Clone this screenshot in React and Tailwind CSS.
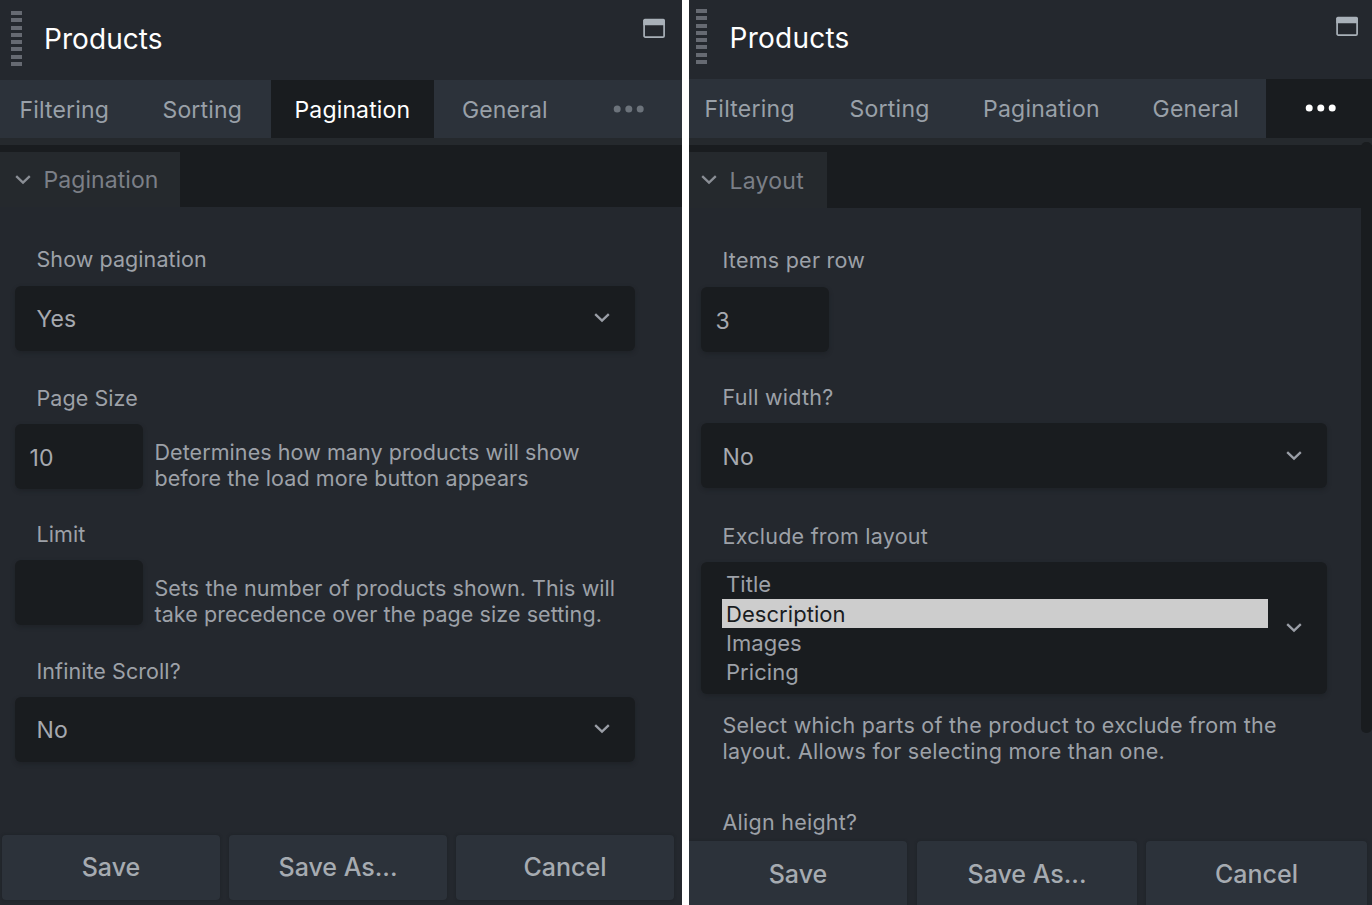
import React from "react";

function Grip() {
  return (
    <div className="flex flex-col gap-[3.3px]">
      {Array.from({ length: 8 }, (_, i) => (
        <span key={i} className="h-[4px] w-[11px] bg-[#666a72]" />
      ))}
    </div>
  );
}

function WindowIcon() {
  return (
    <svg width="24" height="22" viewBox="0 0 24 22" className="block">
      <rect x="2.1" y="2.1" width="20" height="17" rx="1.2" fill="none" stroke="#a9b1b9" strokeWidth="1.7" />
      <path d="M1.3 2.2Q1.3 0.7 2.8 0.7H21.4Q22.9 0.7 22.9 2.2V7.2H1.3Z" fill="#a9b1b9" />
    </svg>
  );
}

function Chevron({ className = "text-[#9a9ea6]" }) {
  return (
    <svg width="16" height="10" viewBox="0 0 16 10" className={`block shrink-0 ${className}`}>
      <path d="M1.2 1.2L8 7.7L14.8 1.2" fill="none" stroke="currentColor" strokeWidth="2.3" />
    </svg>
  );
}

function Dots({ className }) {
  return (
    <svg width="32" height="8" viewBox="0 0 32 8" className={`block ${className}`}>
      <circle cx="4.2" cy="4" r="3.5" fill="currentColor" />
      <circle cx="15.8" cy="4" r="3.5" fill="currentColor" />
      <circle cx="27.2" cy="4" r="3.5" fill="currentColor" />
    </svg>
  );
}

function Label({ className, children }) {
  return (
    <div className={`text-[21.5px] leading-[26px] text-[#9da1a8] ${className}`}>{children}</div>
  );
}

function Select({ value, className }) {
  return (
    <div className={`flex h-[65px] shrink-0 items-center justify-between rounded-[6px] bg-[#191c1f] pl-[22px] pr-[25px] shadow-[0_2px_4px_rgba(20,23,26,0.35)] ${className}`}>
      <span className="pt-[2px] text-[23px] leading-[26px] text-[#a6a9af]">{value}</span>
      <Chevron />
    </div>
  );
}

function NumberBox({ value, className }) {
  return (
    <div className={`flex h-[65px] w-[128px] shrink-0 items-center rounded-[6px] bg-[#191c1f] pl-[15px] pt-[2px] text-[23px] leading-[26px] text-[#a6a9af] shadow-[0_2px_4px_rgba(20,23,26,0.35)] ${className}`}>
      {value}
    </div>
  );
}

function Help({ lines, className }) {
  return (
    <div className={`text-[21.5px] leading-[25.7px] text-[#9da1a8] ${className}`}>
      {lines.map((l) => (
        <div key={l}>{l}</div>
      ))}
    </div>
  );
}

function Button({ className, children }) {
  return (
    <button className={`flex items-center justify-center bg-[#2c323a] pb-[2px] text-[25px] leading-[30px] font-medium tracking-normal text-[#a6abb1] shadow-[0_0_3px_rgba(20,23,26,0.35)] ${className}`}>
      {children}
    </button>
  );
}

function LeftPanel() {
  return (
    <section className="flex h-[905px] w-[682px] shrink-0 flex-col overflow-hidden bg-[#24282e] tracking-[0.07px]">
      <header className="flex h-[80px] shrink-0 items-start pl-[11px] pr-[16px]">
        <div className="pt-[11px]"><Grip /></div>
        <h1 className="ml-[22px] mt-[22px] flex-1 text-[28px] leading-[34px] text-white">Products</h1>
        <div className="mt-[18px]"><WindowIcon /></div>
      </header>
      <nav className="flex h-[58px] shrink-0 bg-[#2c323a] text-[23px] tracking-[0.15px] leading-[60px] text-[#99a0a8]">
        <div className="w-[142px] pl-[19.5px]">Filtering</div>
        <div className="w-[129px] pl-[20.5px]">Sorting</div>
        <div className="w-[163px] bg-[#191c1f] pl-[23.5px] text-white">Pagination</div>
        <div className="w-[179px] pl-[28px]">General</div>
        <div className="flex items-center"><Dots className="text-[#6c737b]" /></div>
      </nav>
      <div className="h-[7px] shrink-0 bg-[#25292d]" />
      <div className="flex h-[62px] shrink-0 items-end bg-[#191c1f]">
        <div className="flex h-[55px] w-[180px] items-center gap-[13px] bg-[#25292d] pl-[14.5px] text-[23px] text-[#7b7f87]">
          <Chevron className="text-[#8a8e95]" />
          <span className="pt-[2px]">Pagination</span>
        </div>
      </div>
      <div className="flex flex-1 flex-col pl-[14.5px]">
        <Label className="mt-[39px] ml-[22px]">Show pagination</Label>
        <Select value="Yes" className="mt-[13.5px] w-[620px]" />
        <Label className="mt-[34.5px] ml-[22px]">Page Size</Label>
        <div className="mt-[13px] flex">
          <NumberBox value="10" />
          <Help className="ml-[12px] mt-[16px]" lines={["Determines how many products will show", "before the load more button appears"]} />
        </div>
        <Label className="mt-[30px] ml-[22px]">Limit</Label>
        <div className="mt-[13px] flex">
          <NumberBox value="" />
          <Help className="ml-[12px] mt-[16px]" lines={["Sets the number of products shown. This will", "take precedence over the page size setting."]} />
        </div>
        <Label className="mt-[30px] ml-[22px]">Infinite Scroll?</Label>
        <Select value="No" className="mt-[13px] w-[620px]" />
      </div>
      <footer className="flex h-[70px] shrink-0 gap-[9px] pl-[2px]">
        <Button className="h-[65px] w-[218px] rounded-[4px]">Save</Button>
        <Button className="h-[65px] w-[218px] rounded-[4px]">Save As...</Button>
        <Button className="h-[65px] w-[218px] rounded-[4px]">Cancel</Button>
      </footer>
    </section>
  );
}

const options = ["Title", "Description", "Images", "Pricing"];

function RightPanel() {
  return (
    <section className="relative flex h-[905px] w-[683px] shrink-0 flex-col overflow-hidden bg-[#24282e] tracking-[0.25px]">
      <header className="flex h-[79px] shrink-0 items-start pl-[7px] pr-[13px]">
        <div className="pt-[9px]"><Grip /></div>
        <h1 className="ml-[22.5px] mt-[21px] flex-1 text-[28px] leading-[34px] text-white">Products</h1>
        <div className="mt-[16px]"><WindowIcon /></div>
      </header>
      <nav className="flex h-[59px] shrink-0 bg-[#2c323a] text-[23px] leading-[61px] text-[#99a0a8]">
        <div className="w-[140px] pl-[15.5px]">Filtering</div>
        <div className="w-[134px] pl-[20.5px]">Sorting</div>
        <div className="w-[169px] pl-[20px]">Pagination</div>
        <div className="w-[134px] pl-[20.5px]">General</div>
        <div className="flex flex-1 items-center bg-[#191c1f] pb-[1px] pl-[39px]"><Dots className="text-white" /></div>
      </nav>
      <div className="h-[7px] shrink-0 bg-[#25292d]" />
      <div className="flex h-[63px] shrink-0 items-end bg-[#191c1f]">
        <div className="flex h-[56px] w-[138px] items-center gap-[13px] bg-[#25292d] pl-[11.5px] text-[23px] text-[#7b7f87]">
          <Chevron className="text-[#8a8e95]" />
          <span className="pt-[2px]">Layout</span>
        </div>
      </div>
      <div className="flex min-h-0 flex-1 flex-col pl-[11.5px]">
        <Label className="mt-[39px] ml-[22px]">Items per row</Label>
        <NumberBox value="3" className="mt-[14px]" />
        <Label className="mt-[32px] ml-[22px]">Full width?</Label>
        <Select value="No" className="mt-[13px] w-[626px]" />
        <Label className="mt-[35px] ml-[22px]">Exclude from layout</Label>
        <div className="mt-[13px] flex h-[132px] w-[626px] shrink-0 items-center justify-between rounded-[6px] bg-[#191c1f] pl-[21.5px] pr-[25px] shadow-[0_2px_4px_rgba(20,23,26,0.35)]">
          <ul className="w-[545.5px] text-[22px] tracking-[0.05px] text-[#9da1a8]">
            {options.map((o) => (
              <li key={o} className={`h-[29.4px] pl-[4px] leading-[30px] ${o === "Description" ? "bg-[#cdcdcd] text-[#191c1f]" : ""}`}>{o}</li>
            ))}
          </ul>
          <Chevron />
        </div>
        <Help className="ml-[22px] mt-[19px]" lines={["Select which parts of the product to exclude from the", "layout. Allows for selecting more than one."]} />
        <Label className="mt-[45px] ml-[22px]">Align height?</Label>
      </div>
      <footer className="flex h-[64px] shrink-0 gap-[9px]">
        <Button className="h-[67px] w-[218px] rounded-tr-[4px]">Save</Button>
        <Button className="ml-[1px] h-[67px] w-[220px] rounded-t-[4px]">Save As...</Button>
        <Button className="h-[67px] w-[221px] rounded-t-[4px]">Cancel</Button>
      </footer>
      <div className="absolute right-0 top-[142px] h-[591px] w-[11px] rounded-[5px] bg-[#191c1f]" />
    </section>
  );
}

export default function App() {
  return (
    <main className="flex h-[905px] w-[1372px] gap-[7px] overflow-hidden bg-white font-['Inter',sans-serif]">
      <LeftPanel />
      <RightPanel />
    </main>
  );
}
